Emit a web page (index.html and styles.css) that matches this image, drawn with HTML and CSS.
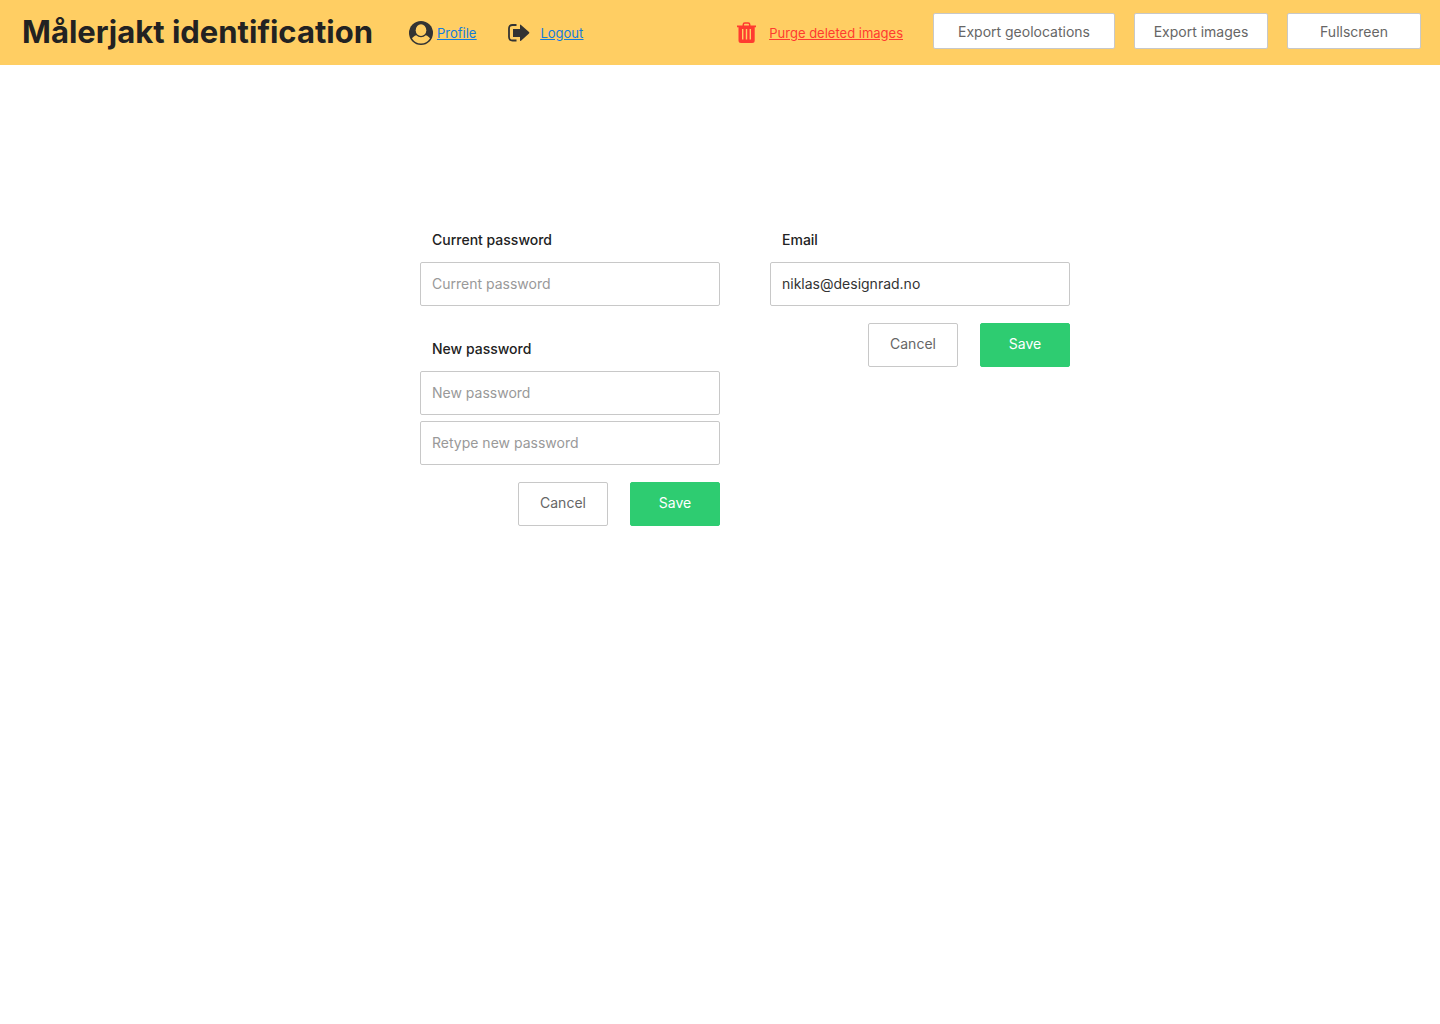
FILE: index.html
```
<!DOCTYPE html>
<html lang="en">
<head>
<meta charset="utf-8">
<meta name="viewport" content="width=device-width, initial-scale=1">
<title>Målerjakt identification</title>
<link rel="stylesheet" href="styles.css">
</head>
<body>
<header class="topbar">
  <h1 class="brand">Målerjakt identification</h1>
  <nav class="nav">
    <a class="link profile" href="#profile">
      <svg width="24" height="24" viewBox="0 0 24 24" aria-hidden="true">
        <circle cx="12" cy="12" r="12" fill="#333"/>
        <path d="M7.200 14.300C5.200 15 3.700 16.200 3 17.600a10.700 10.700 0 0 0 18 0c-.7-1.400-2.200-2.600-4.200-3.300A7 7 0 0 1 12 16.300a7 7 0 0 1-4.800-2z" fill="#ffce63"/>
        <ellipse cx="12" cy="9.200" rx="5.300" ry="5.900" fill="#ffce63"/>
      </svg>
      <span>Profile</span>
    </a>
    <a class="link logout" href="#logout">
      <svg width="22" height="18" viewBox="0 0 22 18" aria-hidden="true">
        <path d="M8.500 1H4.500Q1 1 1 4.500v8.500Q1 16.500 4.500 16.500h4" fill="none" stroke="#333" stroke-width="1.800"/>
        <path d="M5 5h7V1.300q0-1.200 1-.4l8 7.200q.8.700 0 1.400L13 16.700q-1 .8-1-.4V13H5z" fill="#333"/>
      </svg>
      <span>Logout</span>
    </a>
  </nav>
  <div class="actions">
    <a class="link purge" href="#purge">
      <svg width="20" height="22" viewBox="0 0 20 22" aria-hidden="true">
        <path d="M6.300 4V2.500Q6.300 1 7.800 1h3.400q1.500 0 1.500 1.500V4" fill="none" stroke="#ff3b30" stroke-width="1.500"/>
        <path d="M0 3.500h19v1.700h-1.300V18.500q0 2.500-2.500 2.500H4q-2.500 0-2.500-2.500V5.200H0z" fill="#ff3b30"/>
        <path d="M5.700 7v10.500M9.500 7v10.500M13.300 7v10.500" stroke="#ffce63" stroke-width="1.400"/>
      </svg>
      <span>Purge deleted images</span>
    </a>
    <div class="exports">
      <button class="btn small wide" type="button">Export geolocations</button>
      <button class="btn small" type="button">Export images</button>
      <button class="btn small" type="button">Fullscreen</button>
    </div>
  </div>
</header>
<main class="forms">
  <form class="form">
    <div class="field">
      <label for="current">Current password</label>
      <input id="current" type="password" placeholder="Current password">
    </div>
    <div class="field next">
      <label for="new">New password</label>
      <input id="new" type="password" placeholder="New password">
      <input class="retype" type="password" placeholder="Retype new password" aria-label="Retype new password">
    </div>
    <div class="buttons">
      <button class="btn" type="reset">Cancel</button>
      <button class="btn save" type="submit">Save</button>
    </div>
  </form>
  <form class="form">
    <div class="field">
      <label for="email">Email</label>
      <input id="email" type="email" value="niklas@designrad.no">
    </div>
    <div class="buttons">
      <button class="btn" type="reset">Cancel</button>
      <button class="btn save" type="submit">Save</button>
    </div>
  </form>
</main>
</body>
</html>
```
FILE: styles.css
```
* {
  box-sizing: border-box;
}

body {
  margin: 0;
  background: #fff;
  color: #222;
  font: 14px/20px Inter, "Liberation Sans", sans-serif;
}

.topbar {
  display: flex;
  align-items: center;
  min-height: 65px;
  padding: 0 19px 0 22px;
  background: #ffce63;
}

.brand {
  margin: 0;
  padding-bottom: 1px;
  font-size: 31px;
  line-height: 40px;
  font-weight: 700;
  white-space: nowrap;
}

.nav {
  display: flex;
  gap: 32px;
  margin-left: 36px;
}

.link {
  display: flex;
  align-items: center;
  color: #147cdc;
  font-size: 13px;
  white-space: nowrap;
}

.link svg {
  margin-top: 1px;
}

.link span {
  text-decoration: underline;
}

.profile {
  gap: 4px;
}

.logout {
  gap: 10px;
}

.purge {
  gap: 12px;
  color: #ff3b30;
}

.actions {
  display: flex;
  align-items: center;
  gap: 30px;
  margin-left: auto;
}

.exports {
  display: flex;
  gap: 19px;
  padding-bottom: 3px;
}

.btn {
  width: 90px;
  height: 44px;
  padding: 0 0 2px;
  border: 1px solid #c8c8c8;
  border-radius: 2px;
  background: #fff;
  color: #666;
  font: inherit;
  white-space: nowrap;
}

.small {
  width: 134px;
  height: 36px;
  padding: 2px 0 0;
}

.wide {
  width: 182px;
}

.save {
  border-color: #2ecc71;
  background: #2ecc71;
  color: #fff;
}

.forms {
  display: flex;
  flex-wrap: wrap;
  justify-content: center;
  gap: 50px;
  padding: 165px 0 40px 50px;
}

.form {
  width: 300px;
}

.field {
  display: flex;
  flex-direction: column;
}

.next {
  margin-top: 33px;
}

.field label {
  margin-bottom: 12px;
  padding-left: 12px;
  font-weight: 500;
}

.field input {
  height: 44px;
  padding: 0 11px 2px;
  border: 1px solid #c8c8c8;
  border-radius: 2px;
  background: #fff;
  color: #333;
  font: inherit;
}

.field input::placeholder {
  color: #999;
}

.field .retype {
  margin-top: 6px;
}

.buttons {
  display: flex;
  justify-content: flex-end;
  gap: 22px;
  margin-top: 17px;
}
```
